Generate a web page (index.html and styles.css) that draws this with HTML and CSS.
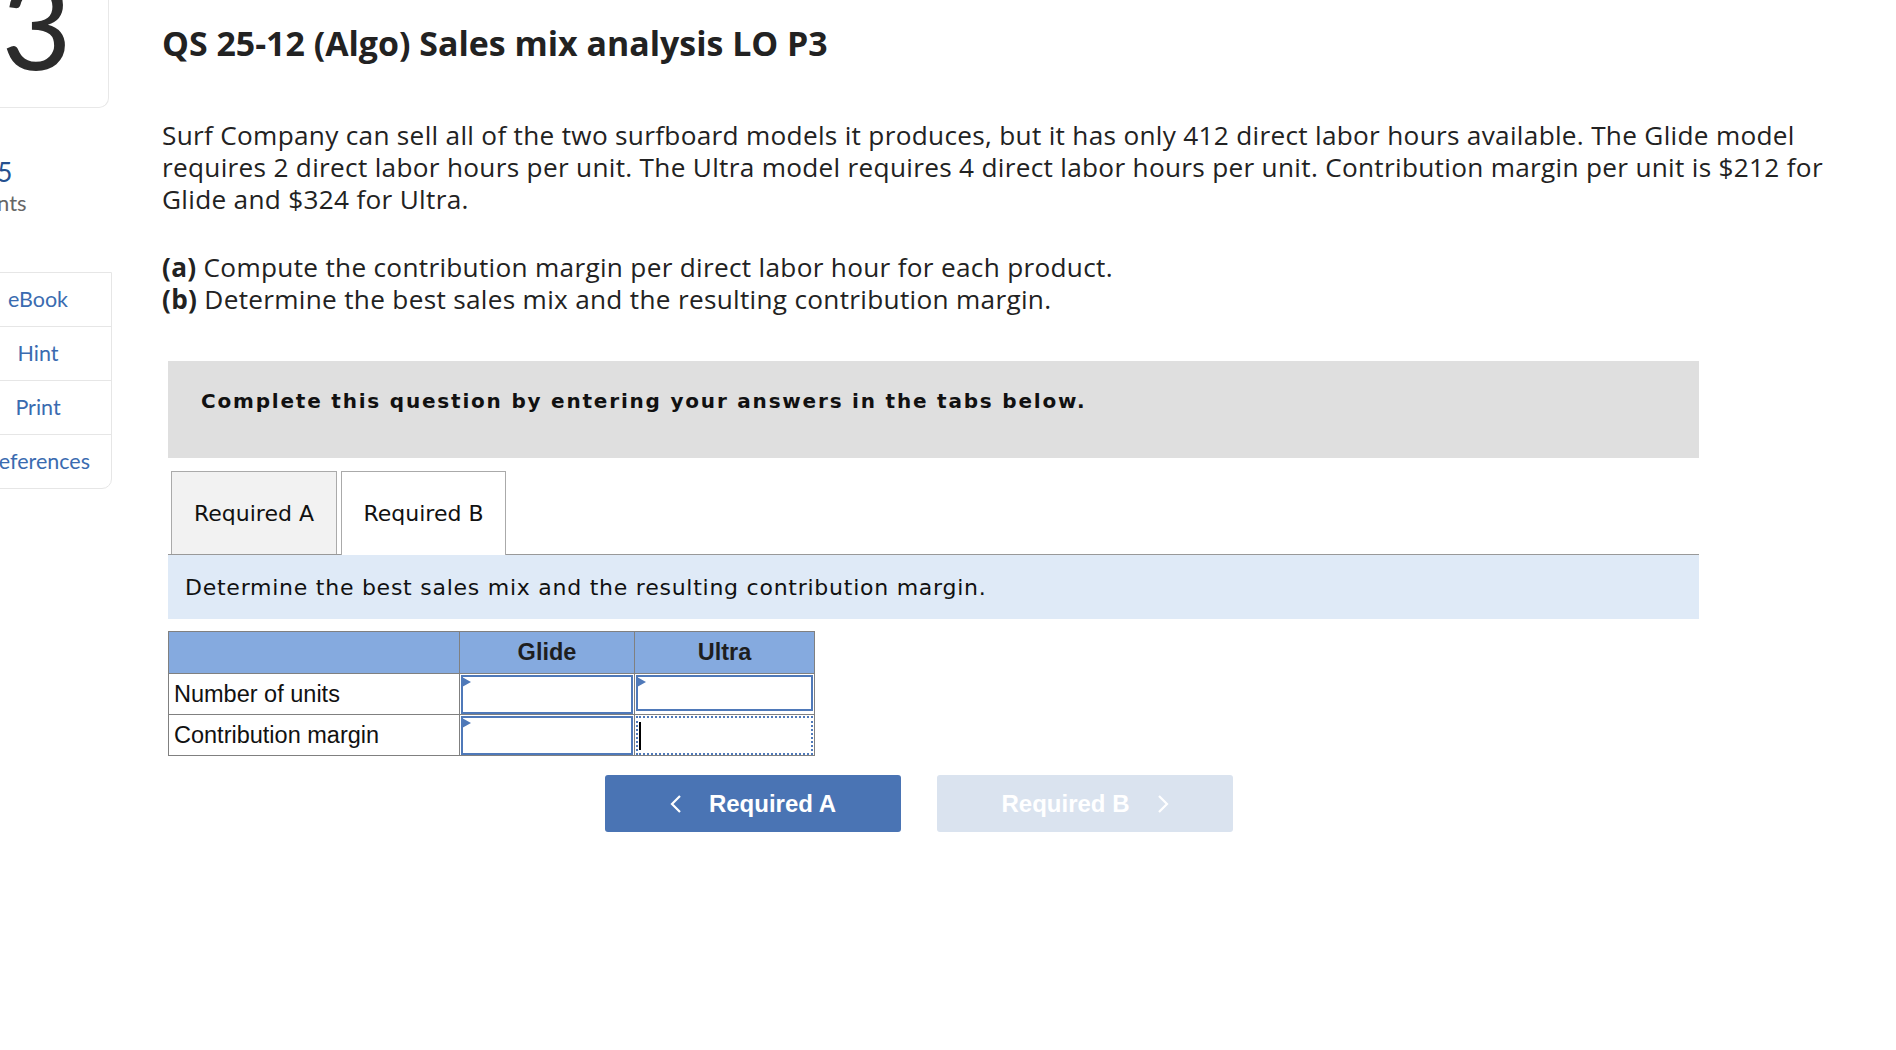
FILE: index.html
```html
<!DOCTYPE html>
<html lang="en">
<head>
<meta charset="utf-8">
<title>QS 25-12 (Algo) Sales mix analysis LO P3</title>
<link rel="stylesheet" href="styles.css">
</head>
<body>
<div class="page">
  <aside class="side">
    <div class="numbox"><span class="num">3</span></div>
    <div class="score">
      <div class="pts">2.5</div>
      <div class="ptslabel">points</div>
    </div>
    <nav class="tools">
      <a class="tool">eBook</a>
      <a class="tool">Hint</a>
      <a class="tool">Print</a>
      <a class="tool last">References</a>
    </nav>
  </aside>
  <main class="main">
    <h1 class="title">QS 25-12 (Algo) Sales mix analysis LO P3</h1>
    <p class="prob">Surf Company can sell all of the two surfboard models it produces, but it has only 412 direct labor hours available. The Glide model<br>requires 2 direct labor hours per unit. The Ultra model requires 4 direct labor hours per unit. Contribution margin per unit is $212 for<br>Glide and $324 for Ultra.</p>
    <p class="parts"><b>(a)</b> Compute the contribution margin per direct labor hour for each product.<br><b>(b)</b> Determine the best sales mix and the resulting contribution margin.</p>

    <section class="widget">
      <div class="instr">Complete this question by entering your answers in the tabs below.</div>
      <div class="tabs">
        <div class="tab">Required A</div>
        <div class="tab active">Required B</div>
      </div>
      <div class="prompt">Determine the best sales mix and the resulting contribution margin.</div>
      <table class="grid">
        <colgroup><col class="c1"><col class="c2"><col class="c3"></colgroup>
        <thead>
          <tr><th></th><th>Glide</th><th>Ultra</th></tr>
        </thead>
        <tbody>
          <tr>
            <td class="lbl">Number of units</td>
            <td><div class="inp mark"></div></td>
            <td><div class="inp mark short"></div></td>
          </tr>
          <tr>
            <td class="lbl">Contribution margin</td>
            <td><div class="inp mark"></div></td>
            <td><div class="inp focus"><span class="caret"></span></div></td>
          </tr>
        </tbody>
      </table>
      <div class="nav">
        <div class="btn prev">
          <svg width="12" height="20" viewBox="0 0 12 20"><polyline points="10,2 2,10 10,18" fill="none" stroke="#fff" stroke-width="2.2"/></svg>
          <span>Required A</span>
        </div>
        <div class="btn next">
          <span>Required B</span>
          <svg width="12" height="20" viewBox="0 0 12 20"><polyline points="2,2 10,10 2,18" fill="none" stroke="#fff" stroke-width="2.2"/></svg>
        </div>
      </div>
    </section>
  </main>
</div>
</body>
</html>
```
FILE: styles.css
```css
html, body {
  margin: 0;
  height: 100%;
  overflow: hidden;
  background: #fff;
}
body {
  font-family: Lato, "Open Sans", sans-serif;
  color: #222;
}
.page {
  display: flex;
  align-items: flex-start;
  margin-left: -36px;
}

/* sidebar */
.side {
  width: 148px;
  flex: none;
  display: flex;
  flex-direction: column;
}
.numbox {
  margin-top: -40px;
  height: 148px;
  width: 145px;
  box-sizing: border-box;
  border: 1px solid #e8e8e8;
  border-top: none;
  border-radius: 0 0 10px 0;
  text-align: center;
  padding-top: 3px;
}
.num {
  font-size: 121px;
  line-height: 121px;
  color: #2b2b2b;
}
.score {
  margin-top: 49px;
  padding-left: 3px;
}
.pts {
  font-size: 26px;
  line-height: 30px;
  padding-left: 9px;
  color: #25508f;
}
.ptslabel {
  font-size: 22px;
  line-height: 30px;
  padding-top: 1px;
  color: #666;
}
.tools {
  margin-top: 54px;
  border: 1px solid #e6e6e6;
  border-radius: 0 0 10px 0;
  display: flex;
  flex-direction: column;
}
.tool {
  height: 53px;
  line-height: 53px;
  text-align: center;
  font-size: 21.5px;
  color: #3a6bb0;
  border-bottom: 1px solid #e6e6e6;
}
.tool.last {
  border-bottom: none;
}

/* main */
.main {
  margin-left: 50px;
  width: 1700px;
  font-family: "Open Sans", Lato, sans-serif;
}
.title {
  font-size: 33.9px;
  font-weight: 700;
  line-height: 41px;
  margin: 23px 0 0;
  color: #222;
}
.prob {
  font-size: 26.2px;
  letter-spacing: 0.3px;
  line-height: 32px;
  margin: 55px 0 0;
  color: #222;
}
.parts {
  font-size: 26.2px;
  letter-spacing: 0.3px;
  line-height: 32px;
  margin: 36px 0 0;
  color: #222;
}

/* question widget */
.widget {
  margin: 46px 0 0 6px;
  width: 1531px;
}
.instr {
  background: #dfdfdf;
  height: 97px;
  box-sizing: border-box;
  padding: 29px 0 0 33px;
  font-family: "DejaVu Sans", Verdana, sans-serif;
  font-weight: 700;
  font-size: 20px;
  letter-spacing: 1.8px;
  line-height: 23px;
  color: #111;
}
.tabs {
  display: flex;
  align-items: flex-end;
  gap: 4px;
  padding-left: 3px;
  margin-top: 13px;
  height: 83px;
  border-bottom: 1px solid #999;
}
.tab {
  box-sizing: border-box;
  width: 166px;
  height: 83px;
  border: 1px solid #aaa;
  border-bottom: none;
  background: #f2f2f2;
  font-family: "DejaVu Sans", Verdana, sans-serif;
  font-size: 22px;
  line-height: 26px;
  padding-top: 29px;
  text-align: center;
  color: #111;
}
.tab.active {
  width: 165px;
  height: 84px;
  margin-bottom: -1px;
  background: #fff;
}
.prompt {
  background: #dfeaf7;
  height: 64px;
  box-sizing: border-box;
  padding: 20px 17px 0;
  font-family: "DejaVu Sans", Verdana, sans-serif;
  font-size: 22px;
  letter-spacing: 0.75px;
  line-height: 26px;
  color: #111;
}

/* table */
.grid {
  margin-top: 12px;
  border-collapse: collapse;
  table-layout: fixed;
  width: 646px;
  font-family: "Liberation Sans", Arial, sans-serif;
  font-size: 23.5px;
  color: #111;
}
.c1 { width: 291px; }
.c2 { width: 175px; }
.c3 { width: 180px; }
.grid th, .grid td {
  border: 1px solid #808080;
  padding: 0;
}
.grid th {
  background: #85aadf;
  height: 41px;
  font-weight: 700;
  color: #1e1e1e;
}
.grid td {
  height: 40px;
}
.grid td.lbl {
  padding-left: 5px;
}
.inp {
  position: relative;
  box-sizing: border-box;
  height: 39px;
  margin: 0 1px;
  border: 2px solid #4f79b9;
  background: #fff;
}
.inp.short {
  height: 36px;
  margin-bottom: 3px;
}
.inp.mark::before {
  content: "";
  position: absolute;
  left: -1px;
  top: 0;
  border-left: 9px solid #4f79b9;
  border-top: 5px solid transparent;
  border-bottom: 5px solid transparent;
}
.inp.focus {
  border: 2px dotted #4f79b9;
}
.caret {
  position: absolute;
  left: 1px;
  top: 4px;
  width: 2px;
  height: 28px;
  background: #000;
}

/* nav buttons */
.nav {
  display: flex;
  gap: 36px;
  margin: 19px 0 0 437px;
}
.btn {
  width: 296px;
  height: 57px;
  border-radius: 3px;
  display: flex;
  align-items: center;
  justify-content: center;
  gap: 27px;
  font-family: "Liberation Sans", Arial, sans-serif;
  font-weight: 700;
  font-size: 24px;
  color: #fff;
}
.btn.prev { background: #4a74b4; }
.btn.next { background: #dae3ef; }
```
